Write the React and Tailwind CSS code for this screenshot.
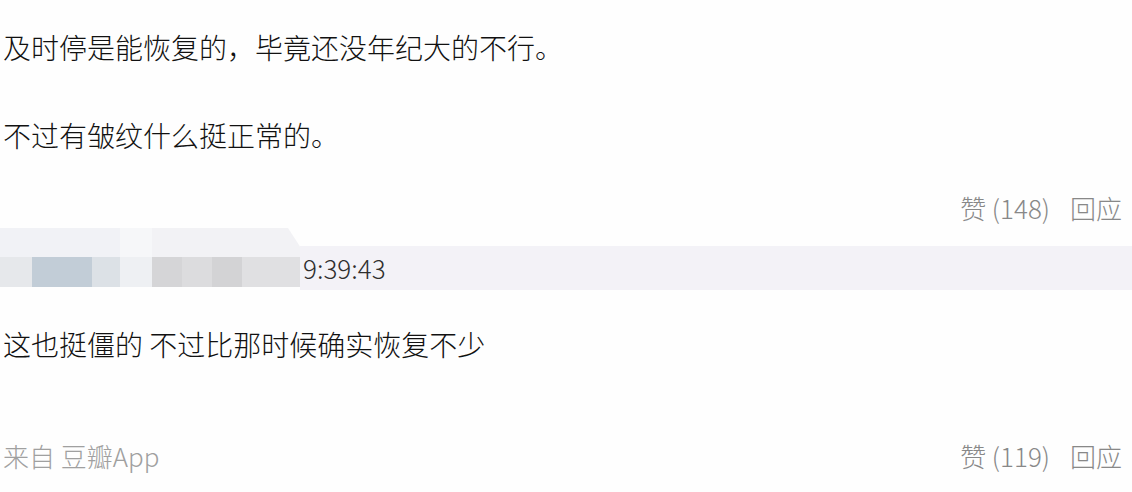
export default function App() {
  const font = { fontFamily: '"Noto Sans CJK SC", "Noto Sans", sans-serif' };
  return (
    <div className="w-[1132px] h-[492px] bg-[#fefefe] flex flex-col overflow-hidden font-light" style={font}>
      <div className="h-[94px] flex items-center pl-[3px] text-[28px] text-[#111111] leading-none">
        及时停是能恢复的，毕竟还没年纪大的不行。
      </div>
      <div className="h-[82px] flex items-center pl-[3px] text-[28px] text-[#111111] leading-none">
        不过有皱纹什么挺正常的。
      </div>
      <div className="h-[52px] pt-3 flex items-center justify-end pr-[10px] text-[26px] text-[#888888] leading-none">
        <span>赞 (148)</span>
        <span className="ml-[20px]">回应</span>
      </div>
      <div className="h-[62px] flex">
        <div className="w-[300px] flex flex-col [clip-path:polygon(0_0,96%_0,100%_30%,100%_100%,0_100%)]">
          <div className="h-[29px] flex">
            <div className="w-[120px] bg-[#f1f2f6]" />
            <div className="w-[32px] bg-[#f6f7f9]" />
            <div className="flex-1 bg-[#f2f2f5]" />
          </div>
          <div className="h-[30px] flex">
            <div className="w-[32px] bg-[#e6e8eb]" />
            <div className="w-[60px] bg-[#c2cdd7]" />
            <div className="w-[28px] bg-[#dce1e6]" />
            <div className="w-[32px] bg-[#eef0f3]" />
            <div className="w-[30px] bg-[#d5d5d7]" />
            <div className="w-[30px] bg-[#dcdcde]" />
            <div className="w-[30px] bg-[#d3d3d5]" />
            <div className="flex-1 bg-[#e0e0e2]" />
          </div>
        </div>
        <div className="flex-1 mt-[18px] h-[44px] bg-[#f3f2f7] flex items-center pl-[3px] text-[26px] text-[#2e2e2e] leading-none">
          9:39:43
        </div>
      </div>
      <div className="h-[108px] flex items-center pl-[3px] text-[28px] text-[#111111] leading-none">
        这也挺僵的 不过比那时候确实恢复不少
      </div>
      <div className="h-[94px] pt-[22px] flex items-center justify-between pl-[3px] pr-[10px] text-[26px] leading-none">
        <span className="text-[#a0a0a0]">来自 豆瓣App</span>
        <span className="flex text-[#888888]">
          <span>赞 (119)</span>
          <span className="ml-[20px]">回应</span>
        </span>
      </div>
    </div>
  );
}
